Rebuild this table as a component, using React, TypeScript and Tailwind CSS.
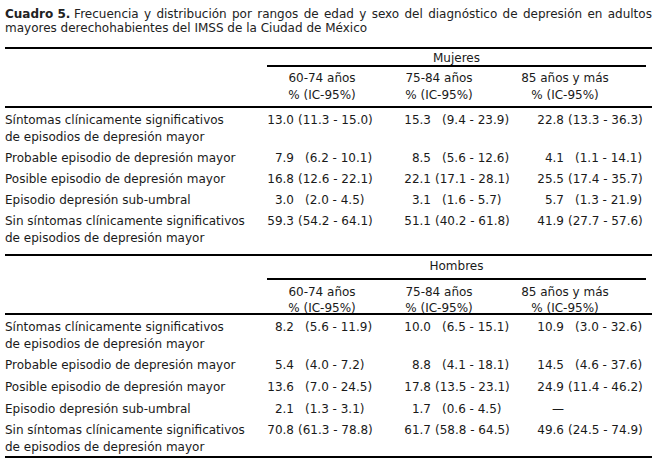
import React from "react";

type Cell = { v: string; ci?: string; pad?: boolean };
type Row = { label: string[]; cells: Cell[]; h: string };

const mujeres: Row[] = [
  {
    label: ["Síntomas clínicamente significativos", "de episodios de depresión mayor"],
    cells: [
      { v: "13.0", ci: "(11.3 - 15.0)" },
      { v: "15.3", ci: "(9.4 - 23.9)", pad: true },
      { v: "22.8", ci: "(13.3 - 36.3)" },
    ],
    h: "h-[38px]",
  },
  {
    label: ["Probable episodio de depresión mayor"],
    cells: [
      { v: "7.9", ci: "(6.2 - 10.1)", pad: true },
      { v: "8.5", ci: "(5.6 - 12.6)", pad: true },
      { v: "4.1", ci: "(1.1 - 14.1)", pad: true },
    ],
    h: "h-[21px]",
  },
  {
    label: ["Posible episodio de depresión mayor"],
    cells: [
      { v: "16.8", ci: "(12.6 - 22.1)" },
      { v: "22.1", ci: "(17.1 - 28.1)" },
      { v: "25.5", ci: "(17.4 - 35.7)" },
    ],
    h: "h-[21px]",
  },
  {
    label: ["Episodio depresión sub-umbral"],
    cells: [
      { v: "3.0", ci: "(2.0 - 4.5)", pad: true },
      { v: "3.1", ci: "(1.6 - 5.7)", pad: true },
      { v: "5.7", ci: "(1.3 - 21.9)", pad: true },
    ],
    h: "h-[21px]",
  },
  {
    label: ["Sin síntomas clínicamente significativos", "de episodios de depresión mayor"],
    cells: [
      { v: "59.3", ci: "(54.2 - 64.1)" },
      { v: "51.1", ci: "(40.2 - 61.8)" },
      { v: "41.9", ci: "(27.7 - 57.6)" },
    ],
    h: "h-[38px]",
  },
];

const hombres: Row[] = [
  {
    label: ["Síntomas clínicamente significativos", "de episodios de depresión mayor"],
    cells: [
      { v: "8.2", ci: "(5.6 - 11.9)", pad: true },
      { v: "10.0", ci: "(6.5 - 15.1)", pad: true },
      { v: "10.9", ci: "(3.0 - 32.6)", pad: true },
    ],
    h: "h-[38px]",
  },
  {
    label: ["Probable episodio de depresión mayor"],
    cells: [
      { v: "5.4", ci: "(4.0 - 7.2)", pad: true },
      { v: "8.8", ci: "(4.1 - 18.1)", pad: true },
      { v: "14.5", ci: "(4.6 - 37.6)", pad: true },
    ],
    h: "h-[22px]",
  },
  {
    label: ["Posible episodio de depresión mayor"],
    cells: [
      { v: "13.6", ci: "(7.0 - 24.5)", pad: true },
      { v: "17.8", ci: "(13.5 - 23.1)" },
      { v: "24.9", ci: "(11.4 - 46.2)" },
    ],
    h: "h-[22px]",
  },
  {
    label: ["Episodio depresión sub-umbral"],
    cells: [
      { v: "2.1", ci: "(1.3 - 3.1)", pad: true },
      { v: "1.7", ci: "(0.6 - 4.5)", pad: true },
      { v: "—" },
    ],
    h: "h-[21px]",
  },
  {
    label: ["Sin síntomas clínicamente significativos", "de episodios de depresión mayor"],
    cells: [
      { v: "70.8", ci: "(61.3 - 78.8)" },
      { v: "61.7", ci: "(58.8 - 64.5)" },
      { v: "49.6", ci: "(24.5 - 74.9)" },
    ],
    h: "h-[38px]",
  },
];

function DataCell({ c, w }: { c: Cell; w: string }) {
  return (
    <div className={`flex ${w} shrink-0 whitespace-nowrap`}>
      <span className="w-[27px] text-right shrink-0">{c.v}</span>
      {c.ci && <span className={c.pad ? "pl-[11px]" : "pl-[4px]"}>{c.ci}</span>}
    </div>
  );
}

function DataRow({ r }: { r: Row }) {
  return (
    <div className={`flex ${r.h} pt-[4px] leading-[17px]`}>
      <div className="w-[262px] shrink-0">
        {r.label.map((l, i) => (
          <div key={i} className="whitespace-nowrap">
            {l}
          </div>
        ))}
      </div>
      <DataCell c={r.cells[0]} w="w-[137px]" />
      <DataCell c={r.cells[1]} w="w-[133px]" />
      <DataCell c={r.cells[2]} w="flex-1" />
    </div>
  );
}

function Headers({ h, pt, lead }: { h: string; pt: string; lead: string }) {
  const cols = [
    { w: "w-[110px]", t: "60-74 años" },
    { w: "w-[124px]", t: "75-84 años" },
    { w: "w-[128px]", t: "85 años y más" },
  ];
  return (
    <div className={`flex ${h} ${pt} ${lead} border-b-2 border-black`}>
      <div className="w-[262px] shrink-0" />
      {cols.map((c) => (
        <div key={c.t} className={`${c.w} shrink-0 text-center whitespace-nowrap`}>
          <div>{c.t}</div>
          <div>% (IC-95%)</div>
        </div>
      ))}
    </div>
  );
}

export default function App() {
  return (
    <div className="w-[657px] h-[465px] bg-white text-black font-['DejaVu_Sans',sans-serif] text-[12px] overflow-hidden">
      <div className="px-[5px] pt-[7px] leading-[14px] text-[#222]">
        <div className="whitespace-nowrap flex justify-between">
          <span><b>Cuadro 5.</b> Frecuencia</span>
          <span>y</span>
          <span>distribución</span>
          <span>por</span>
          <span>rangos</span>
          <span>de</span>
          <span>edad</span>
          <span>y</span>
          <span>sexo</span>
          <span>del</span>
          <span>diagnóstico</span>
          <span>de</span>
          <span>depresión</span>
          <span>en</span>
          <span>adultos</span>
        </div>
        <div>mayores derechohabientes del IMSS de la Ciudad de México</div>
      </div>

      <div className="px-[5px] mt-[12px] text-[#1a1a1a]">
        {/* Mujeres */}
        <div className="border-t-2 border-black">
          <div className="flex h-[16px] leading-[18px]">
            <div className="w-[262px] shrink-0" />
            <div className="flex-1 mr-[6px] text-center border-b-2 border-black h-[18px]">Mujeres</div>
          </div>
          <div className="h-[2px]" />
          <Headers h="h-[41px]" pt="pt-[3px]" lead="leading-[17px]" />
          {mujeres.map((r, i) => (
            <DataRow key={i} r={r} />
          ))}
          <div className="h-[7px]" />
        </div>

        {/* Hombres */}
        <div className="border-t-2 border-black">
          <div className="flex h-[22px] leading-[21px]">
            <div className="w-[262px] shrink-0" />
            <div className="flex-1 mr-[6px] text-center border-b-2 border-black h-[24px]">Hombres</div>
          </div>
          <div className="h-[2px]" />
          <Headers h="h-[35px]" pt="pt-[4px]" lead="leading-[16px]" />
          {hombres.map((r, i) => (
            <DataRow key={i} r={r} />
          ))}
          <div className="h-[2px] border-b-2 border-black" />
        </div>
      </div>
    </div>
  );
}
